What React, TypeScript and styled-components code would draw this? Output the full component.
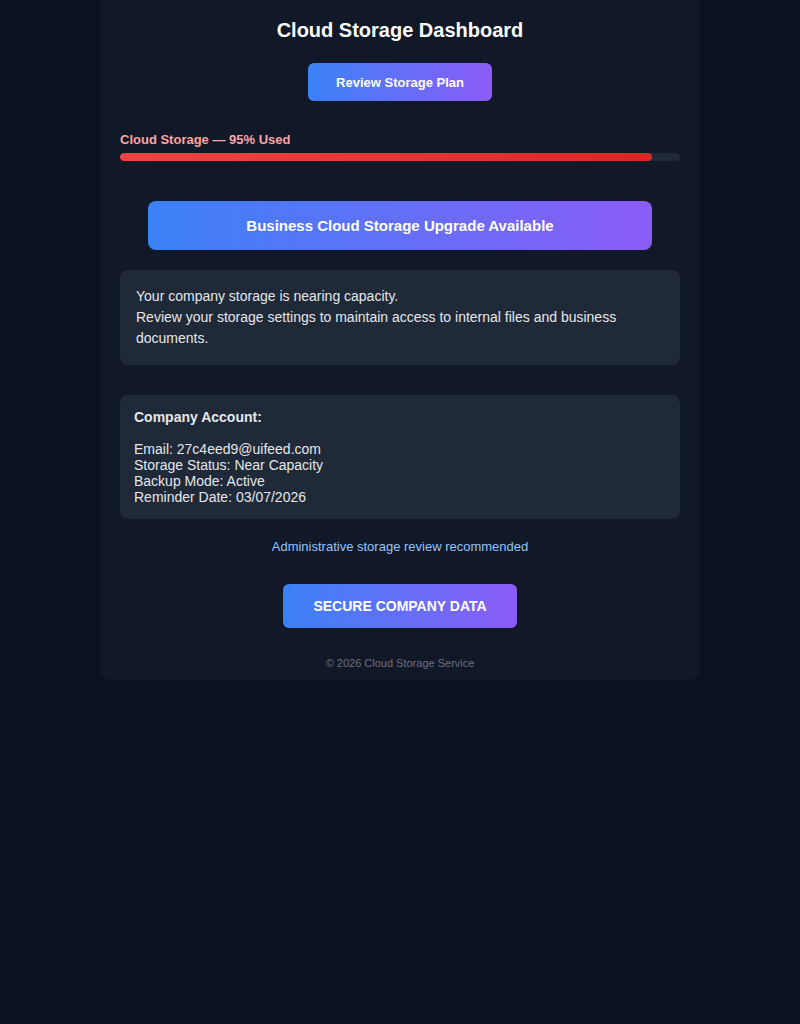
import React from "react";
import styled, { createGlobalStyle } from "styled-components";

const Global = createGlobalStyle`
  html, body { margin: 0; padding: 0; background: #0b1120; }
  body { font-family: "Liberation Sans", Arial, sans-serif; min-height: 1024px; }
  * { box-sizing: border-box; }
`;

const Card = styled.div`
  width: 600px;
  margin: -8px auto 0;
  background: #111827;
  border-radius: 12px;
  padding: 20px 20px 10px;
  display: flex;
  flex-direction: column;
  align-items: center;
`;

const Title = styled.h1`
  margin: 6px 0 0;
  font-size: 20px;
  line-height: 24px;
  font-weight: 700;
  color: #ffffff;
  text-align: center;
`;

const GradientButton = styled.button<{ $big?: boolean }>`
  border: none;
  border-radius: 6px;
  background: linear-gradient(90deg, #3b82f6, #8b5cf6);
  color: #ffffff;
  font-family: "Liberation Sans", Arial, sans-serif;
  font-weight: 700;
  font-size: ${(p) => (p.$big ? "14px" : "13px")};
  height: ${(p) => (p.$big ? "44px" : "38px")};
  width: ${(p) => (p.$big ? "234px" : "184px")};
  text-transform: ${(p) => (p.$big ? "uppercase" : "none")};
  margin-top: ${(p) => (p.$big ? "30px" : "21px")};
  padding: 0;
  cursor: pointer;
`;

const StorageBlock = styled.div`
  width: 100%;
  margin-top: 31px;
  display: flex;
  flex-direction: column;
  gap: 5px;
`;

const StorageLabel = styled.div`
  font-size: 13px;
  line-height: 16px;
  font-weight: 700;
  color: #fca5a5;
`;

const Track = styled.div`
  width: 100%;
  height: 8px;
  border-radius: 4px;
  background: #1f2937;
  overflow: hidden;
`;

const Fill = styled.div`
  height: 100%;
  border-radius: 4px;
  background: linear-gradient(90deg, #ef4444, #dc2626);
`;

const Banner = styled.div`
  width: 90%;
  height: 49px;
  margin-top: 40px;
  border-radius: 8px;
  background: linear-gradient(90deg, #3b82f6, #8b5cf6);
  color: #ffffff;
  font-size: 15px;
  font-weight: 700;
  display: flex;
  align-items: center;
  justify-content: center;
`;

const Panel = styled.div<{ $gap: number; $pad: number; $lh: number }>`
  width: 100%;
  margin-top: ${(p) => p.$gap}px;
  background: #1f2937;
  border-radius: 8px;
  padding: ${(p) => p.$pad}px;
  color: #e5e7eb;
  font-size: 14px;
  line-height: ${(p) => p.$lh}px;
`;

const Line = styled.div``;

const Strong = styled.div`
  font-weight: 700;
`;

const Blank = styled.div`
  height: 16px;
`;

const Notice = styled.div`
  margin-top: 20px;
  font-size: 13px;
  line-height: 15px;
  color: #93c5fd;
  text-align: center;
`;

const Footer = styled.div`
  margin-top: 29px;
  font-size: 11px;
  line-height: 13px;
  color: #6b7280;
  text-align: center;
`;

export default function App() {
  const used = 95;
  return (
    <>
      <Global />
      <Card>
        <Title>Cloud Storage Dashboard</Title>
        <GradientButton>Review Storage Plan</GradientButton>
        <StorageBlock>
          <StorageLabel>Cloud Storage — 95% Used</StorageLabel>
          <Track>
            <Fill style={{ width: `${used}%` }} />
          </Track>
        </StorageBlock>
        <Banner>Business Cloud Storage Upgrade Available</Banner>
        <Panel $gap={20} $pad={16} $lh={21}>
          <Line>Your company storage is nearing capacity.</Line>
          <Line>
            Review your storage settings to maintain access to internal files and business
            documents.
          </Line>
        </Panel>
        <Panel $gap={30} $pad={14} $lh={16}>
          <Strong>Company Account:</Strong>
          <Blank />
          <Line>Email: 27c4eed9@uifeed.com</Line>
          <Line>Storage Status: Near Capacity</Line>
          <Line>Backup Mode: Active</Line>
          <Line>Reminder Date: 03/07/2026</Line>
        </Panel>
        <Notice>Administrative storage review recommended</Notice>
        <GradientButton $big>Secure Company Data</GradientButton>
        <Footer>© 2026 Cloud Storage Service</Footer>
      </Card>
    </>
  );
}
